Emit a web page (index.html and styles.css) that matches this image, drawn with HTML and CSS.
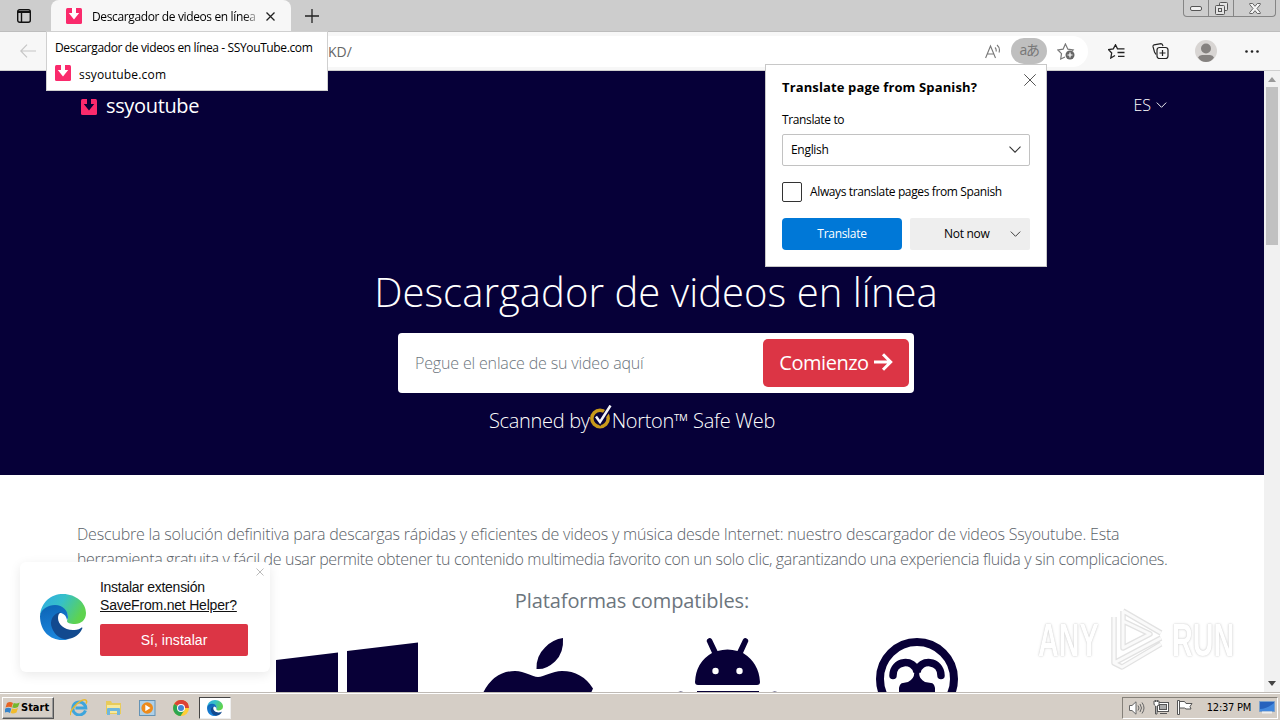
FILE: index.html
```html
<!DOCTYPE html>
<html lang="es">
<head>
<meta charset="utf-8">
<title>Descargador de videos en línea - SSYouTube.com</title>
<link rel="stylesheet" href="styles.css">
</head>
<body>
<svg width="0" height="0" class="defs">
  <defs>
    <linearGradient id="edgeGreen" x1="0" y1="0" x2="1" y2="0.4"><stop offset="0" stop-color="#2fa9e6"/><stop offset=".5" stop-color="#36c0c8"/><stop offset="1" stop-color="#5ed34f"/></linearGradient>
    <linearGradient id="edgeBlue" x1="0" y1="0" x2="0.2" y2="1"><stop offset="0" stop-color="#0c62b4"/><stop offset="1" stop-color="#1b86dc"/></linearGradient>
    <symbol id="edge" viewBox="0 0 46 46">
      <path d="M0 22C1 8 11 0 23 0c13 0 23 9 23 19 0 7-5 11-11 11-5 0-8-1-8-3 0-1 1-2 1-4 0-5-5-10-13-10C8 13 2 17 0 22z" fill="url(#edgeGreen)"/>
      <path d="M0 22c1-7 8-11 15-11 8 0 13 6 13 12 0 2-1 3-1 3-1-5-4-7-7-7-4 2-6 6-5 10 2 8 8 15 14 16-3 1-5 1-7 1C10 46 0 37 0 22z" fill="url(#edgeBlue)"/>
      <path d="M21 18c-8 1-12 9-9 16 3 8 10 12 16 11 7-1 12-5 14-10 1-1 0-2-1-1-3 2-6 2-8 2-9 0-15-6-15-12 0-3 1-5 3-6z" fill="#124a8f"/>
    </symbol>
    <symbol id="download" viewBox="0 0 16 16">
      <rect width="16" height="16" rx="1.500" fill="#fa2a6c"/>
      <path d="M6 0h4v5h3.200L8 11.500 2.800 5H6z" fill="currentColor"/>
    </symbol>
    <symbol id="chevron" viewBox="0 0 12 7"><path d="M.5.7 6 6.200 11.500.7" fill="none" stroke="currentColor" stroke-width="1.100"/></symbol>
  </defs>
</svg>

<div class="screen">
  <div class="tabstrip">
    <svg class="tab-actions" width="14" height="14" viewBox="0 0 14 14" fill="none" stroke="#111" stroke-width="1.400"><rect x=".7" y=".7" width="12.600" height="12.600" rx="2"/><path d="M1 3h12" stroke-width="2"/><path d="M4.500 4v9"/></svg>
    <div class="tab">
      <svg class="favicon" width="16" height="16"><use href="#download"/></svg>
      <span class="tab-title t-tab">Descargador de videos en línea</span>
      <svg width="9" height="9" viewBox="0 0 9 9" stroke="#222" stroke-width="1.300"><path d="M.5.5l8 8m0-8l-8 8"/></svg>
    </div>
    <svg class="new-tab" width="14" height="14" viewBox="0 0 14 14" stroke="#222" stroke-width="1.300"><path d="M7 0v14M0 7h14"/></svg>
    <div class="window-buttons">
      <span class="wb"><svg width="12" height="5" viewBox="0 0 12 5"><rect x=".5" y=".5" width="11" height="4" rx="1.500" fill="#f1f1f1" stroke="#555"/></svg></span>
      <span class="wb"><svg width="13" height="13" viewBox="0 0 13 13" fill="#e3e3e3" stroke="#555"><rect x="4.500" y=".5" width="8" height="8" rx="1"/><rect x=".5" y="3.500" width="9" height="9" rx="1"/><rect x="3.500" y="6.500" width="3" height="3"/></svg></span>
      <span class="wb wb-close"><svg width="12" height="11" viewBox="0 0 12 11" fill="#f5f5f5" stroke="#666"><path d="M.7.5h3L6 3.300 8.300.5h3v1L8 5.500l3.300 4v1h-3L6 7.700l-2.300 2.800h-3v-1L4 5.500.7 1.500z"/></svg></span>
    </div>
  </div>

  <div class="toolbar">
    <svg class="back" width="16" height="14" viewBox="0 0 16 14" fill="none" stroke="#c6c6c6" stroke-width="1.200"><path d="M16 7H1M7 .7.800 7 7 13.300"/></svg>
    <div class="address">
      <span class="url">KD/</span>
      <svg class="read" width="16" height="15" viewBox="0 0 16 15" fill="none" stroke="#777" stroke-width="1.100"><path d="M.6 14 5.500 2l5 12M2.300 10h6.500M10 3.500q1.700 1.600 1 4M12 1q3.500 3 2 7.500"/></svg>
      <span class="translate-pill">aあ</span>
      <svg class="star-plus" width="18" height="17" viewBox="0 0 18 17" fill="none" stroke="#777" stroke-width="1.200"><path d="M8 14 3.700 16l.8-5.300L.9 7l5.200-.8L8.400 1l2.500 5.200 5.200.8-1 1"/><circle cx="13" cy="12" r="4.500" fill="#666" stroke="none"/><path d="M13 9.500v5M10.500 12h5" stroke="#fff"/></svg>
    </div>
    <svg width="17" height="15" viewBox="0 0 17 15" fill="none" stroke="#222" stroke-width="1.300"><path d="M7 11.500 2.800 14l.9-5L.6 5.600l4.700-.7L7.500.8l2 4.100H16.500M9.500 8.500h7M10 12.300h6.500"/></svg>
    <svg class="collections" width="17" height="17" viewBox="0 0 17 17" fill="none" stroke="#222" stroke-width="1.200"><path d="M4 11.500 2.500 9 1 3.700Q.8 2.200 2 1.800L9 .7q1.500 0 2 2.500"/><rect x="5" y="4.500" width="11" height="11" rx="2.500"/><path d="M10.500 7v6M7.500 10h6"/></svg>
    <svg class="avatar" width="22" height="22" viewBox="0 0 22 22"><circle cx="11" cy="11" r="11" fill="#d8d5d3"/><circle cx="11" cy="8.500" r="5" fill="#858280"/><path d="M3 17.500q1-2.500 4-2.500h8q3 0 4 2.500Q16 22 11 22t-8-4.500z" fill="#858280"/></svg>
    <svg class="dots" width="14" height="3" viewBox="0 0 14 3" fill="#222"><circle cx="1.500" cy="1.500" r="1.300"/><circle cx="7" cy="1.500" r="1.300"/><circle cx="12.500" cy="1.500" r="1.300"/></svg>
  </div>

  <div class="viewport">
    <main class="page">
      <section class="hero">
        <header class="site-header">
          <a class="brand"><svg width="16" height="16"><use href="#download"/></svg><span class="t-brand">ssyoutube</span></a>
          <span class="lang"><span class="t-lang">ES</span><svg width="11" height="6"><use href="#chevron"/></svg></span>
        </header>
        <h1><span class="t-title">Descargador de videos en línea</span></h1>
        <div class="search">
          <span class="placeholder t-ph">Pegue el enlace de su video aquí</span>
          <button class="go"><span class="t-go">Comienzo</span><svg width="19" height="18" viewBox="0 0 19 18" fill="none" stroke="#fff" stroke-width="3"><path d="M0 9h16M9 1.200 16.700 9 9 16.800"/></svg></button>
        </div>
        <p class="norton"><span class="t-scan">Scanned by</span><svg width="22" height="24" viewBox="0 0 22 24" fill="none"><circle cx="10" cy="13.500" r="8.200" stroke="#c8991b" stroke-width="3.500"/><path d="M6 12l4 5L20 2" stroke="#05003a" stroke-width="5"/><path d="M6 11.500l4 5.500L20.500.5" stroke="#f4f4fa" stroke-width="2.500"/></svg><span class="t-norton">Norton™ Safe Web</span></p>
      </section>
      <section class="intro">
        <p><span class="t-l1">Descubre la solución definitiva para descargas rápidas y eficientes de videos y música desde Internet: nuestro descargador de videos Ssyoutube. Esta</span><br><span class="t-l2">herramienta gratuita y fácil de usar permite obtener tu contenido multimedia favorito con un solo clic, garantizando una experiencia fluida y sin complicaciones.</span></p>
        <h2><span class="t-plat">Plataformas compatibles:</span></h2>
        <div class="platforms">
          <svg width="142" height="55" viewBox="0 0 142 55"><path d="M0 22 62 14.500V55H0zM71 13 142 4.500V55H71z"/></svg>
          <svg class="apple" width="112" height="55" viewBox="0 0 112 55"><path d="M80 0q1 15-8 23.500Q63 32 53.500 31 53 18 62 9.500 70 1 80 0z"/><path d="M0 55Q11 33 32 33c10 0 17 6 23 6s14-6 24-6q20 0 31 17.500L108 55z"/></svg>
          <svg class="android" width="104" height="55" viewBox="0 0 104 55"><path d="M19 47V44Q20 24 36 15l-5-11a2.800 2.800 0 0 1 5-2.500l5.500 11.500q10-3 20 0L67 1.500A2.800 2.800 0 0 1 72 4l-5 11Q83 25 84 44q0 3-3 3H22q-3 0-3-3z"/><circle cx="39.500" cy="33" r="3.200" fill="#fff"/><circle cx="63.500" cy="33" r="3.200" fill="#fff"/><path d="M21 53h62v2H21zM0 55q5-3 9 0zM94 55q5-3 9 0z"/></svg>
          <svg class="linux" width="82" height="55" viewBox="0 0 82 55"><circle cx="41" cy="41" r="37" fill="none" stroke="#080037" stroke-width="8"/><path d="M17 37.500C17 22 38 20 41 34 44 20 65 22 65 37.500" fill="none" stroke="#080037" stroke-width="7.500" stroke-linecap="round"/><path d="M37 30h8q-5 9 4 14l6 1q3 0 4 5v5H23v-5q1-5 4-5l5-1q9-5 5-14z"/></svg>
        </div>
      </section>
    </main>
    <div class="scrollbar"><i class="arrow up"></i><i class="thumb"></i><i class="arrow down"></i></div>
  </div>

  <footer class="taskbar">
    <button class="start"><svg width="15" height="15" viewBox="0 0 15 15"><path d="M2 3q3-2 6 0L6.500 7.500Q4 6 .5 7.500z" fill="#e76524"/><path d="M8.700 3q3 1 6-.5L13 7Q10 8.500 7.200 7.500z" fill="#74b72d"/><path d="M.3 8.500Q3 7 6.300 8.500L5 13Q2 11-1 13z" fill="#3784ca"/><path d="M7 8.500q3 1 6-.5L11.500 12.500Q8 14 5.700 13z" fill="#f1bb2c"/></svg><b class="t-start">Start</b></button>
    <div class="quick">
      <svg width="18" height="17" viewBox="0 0 18 17"><path d="M15.500 11.500A6.500 6.500 0 1 1 15.800 9H5.500" fill="none" stroke="#3ea5dc" stroke-width="3"/><path d="M1 15.500C-3 15 10-1 15.500 1q2 1 .5 3.500" fill="none" stroke="#e9b92f" stroke-width="1.500"/></svg>
      <svg width="17" height="16" viewBox="0 0 17 16"><path d="M1 1h5l1 2h9v11H1z" fill="#e8cb5b"/><path d="M2 5h13v8H2z" fill="#f7e99b"/><path d="M2 15V9q0-1 1-1h11q1 0 1 1v6h-3v-4H5v4z" fill="#70b7dd"/></svg>
      <svg width="17" height="16" viewBox="0 0 17 16"><rect x=".5" y=".5" width="15.500" height="15" fill="#aed0e8" stroke="#6593b5"/><circle cx="8.200" cy="8" r="5.800" fill="#ed8b1c"/><path d="M6.300 4.700 11.500 8l-5.200 3.300z" fill="#fff"/></svg>
      <svg width="16" height="16" viewBox="0 0 16 16"><circle cx="8" cy="8" r="8" fill="#ffce35"/><path d="M8 8H16A8 8 0 0 0 1.200 3.900z" fill="#dc4136"/><path d="M8 8 1.200 3.900A8 8 0 0 0 7.500 16l4-6z" fill="#2ca650"/><path d="M8 4.500h7.200A8 8 0 0 0 8 0z" fill="#dc4136"/><circle cx="8" cy="8" r="4" fill="#fff"/><circle cx="8" cy="8" r="3" fill="#4285d4"/></svg>
    </div>
    <span class="active-app"><svg width="16" height="16"><use href="#edge"/></svg></span>
    <div class="tray">
      <svg width="16" height="14" viewBox="0 0 16 14" fill="#fff" stroke="#666"><path d="M.5 4.500H3L7 .8v12.400L3 9.500H.5z"/><path d="M9 4.500q2 2.500 0 5M11 3q3 4 0 8M13 1.500q4 5.500 0 11" fill="none"/></svg>
      <svg width="16" height="15" viewBox="0 0 16 15" fill="#fff" stroke="#555"><rect x="4.500" y="2.500" width="11" height="9"/><rect x="6.500" y="4.500" width="7" height="5" fill="#aaa"/><path d="M7 13.500h7" /><path d="M1 1h5v4q-1 1-2 1v8H2.500V6Q1 5 1 4zM2.500 0v2M4.500 0v2"/></svg>
      <svg width="16" height="15" viewBox="0 0 16 15" fill="#fff" stroke="#555"><path d="M.5.5h2v14h-2zM2.500 1.500h5l1.500 2h6l-2 3 1 2.500H9L7.500 8h-5z"/></svg>
      <span class="clock t-clock">12:37 PM</span>
      <svg width="16" height="13" viewBox="0 0 16 13"><path d="M.5.5h15v10H.5z" fill="#2762bd" stroke="#7aa0cb"/><path d="M1 8Q8 8 15 2v8H1z" fill="#4388dd"/><path d="M3 11.500h10" stroke="#eee" stroke-width="2"/></svg>
    </div>
  </footer>

  <aside class="tab-card">
    <span class="t-card">Descargador de videos en línea - SSYouTube.com</span>
    <div class="card-site"><svg class="favicon" width="16" height="16"><use href="#download"/></svg><span class="t-site">ssyoutube.com</span></div>
  </aside>

  <aside class="translate">
    <div class="tr-head"><b class="t-trh">Translate page from Spanish?</b><svg width="12" height="12" viewBox="0 0 12 12" stroke="#555"><path d="M.3.3l11.400 11.400m0-11.400L.3 11.700"/></svg></div>
    <span class="tr-label t-to">Translate to</span>
    <div class="select"><span class="t-eng">English</span><svg width="12" height="7"><use href="#chevron"/></svg></div>
    <label class="check"><i></i><span class="t-always">Always translate pages from Spanish</span></label>
    <div class="tr-buttons"><button class="primary"><span class="t-tr">Translate</span></button><button class="secondary"><span class="t-not">Not now</span><svg width="11" height="6"><use href="#chevron"/></svg></button></div>
  </aside>

  <aside class="install">
    <svg width="46" height="46"><use href="#edge"/></svg>
    <div class="install-body">
      <span class="t-in1">Instalar extensión</span>
      <u class="t-in2">SaveFrom.net Helper?</u>
      <button><span class="t-yes">Sí, instalar</span></button>
    </div>
    <svg class="install-x" width="8" height="8" viewBox="0 0 8 8" stroke="#bbb"><path d="M.5.5l7 7m0-7l-7 7"/></svg>
  </aside>

  <div class="watermark">
    <span class="wm wm-any">ANY</span>
    <svg width="58" height="66" viewBox="0 0 58 66" fill="none" stroke-linejoin="round"><g stroke="#e2e2e2" stroke-width="5.500"><path d="M15 4 53 26M15 4v37l27-14L15 14M6 10v46l8 4 39-23M6 56l47-25"/></g><g stroke="#fafafa" stroke-width="3"><path d="M15 4 53 26M15 4v37l27-14L15 14M6 10v46l8 4 39-23M6 56l47-25"/></g></svg>
    <span class="wm wm-run">RUN</span>
  </div>
</div>
</body>
</html>
```
FILE: styles.css
```css
* { box-sizing: border-box; }
body { margin: 0; font-family: "Open Sans", "Noto Sans", sans-serif; }
button { border: 0; padding: 0; font: inherit; }
svg { display: block; flex: none; }
span, b, u { white-space: nowrap; }
.defs { position: absolute; }
.screen { position: relative; width: 1280px; height: 720px; overflow: hidden; display: flex; flex-direction: column; background: #fff; }

/* text tracking */
.t-tab, .t-card { letter-spacing: -.37px; }
.t-brand { letter-spacing: -.35px; }
.t-title { letter-spacing: .04px; }
.t-ph { letter-spacing: -.16px; }
.t-go { letter-spacing: -.48px; }
.t-scan, .t-norton { letter-spacing: -.3px; }
.t-l1 { letter-spacing: -.19px; }
.t-l2 { letter-spacing: -.335px; }
.t-plat { letter-spacing: -.1px; }
.t-site { letter-spacing: .17px; }
.t-trh { letter-spacing: .13px; }
.t-to, .t-always { letter-spacing: -.37px; }
.t-eng, .t-tr, .t-not { letter-spacing: -.3px; }
.t-in1 { letter-spacing: -.28px; }
.t-in2 { letter-spacing: -.2px; }
.t-yes { letter-spacing: .05px; }
.t-clock { letter-spacing: -.25px; }

/* browser chrome */
.tabstrip { height: 32px; flex: none; display: flex; background: #cdcdcd; border-bottom: 1px solid #bdbdbd; }
.tab-actions { margin: 9px 0 0 17px; }
.tab { width: 240px; height: 32px; margin-left: 20px; padding: 0 15px; display: flex; align-items: center; background: #f7f7f7; border-radius: 8px 8px 0 0; }
.favicon { color: #fff; }
.tab-title { width: 164px; margin: 0 10px; overflow: hidden; font-size: 12px; -webkit-mask-image: linear-gradient(90deg, #000 152px, rgba(0, 0, 0, .3)); }
.new-tab { margin: 9px 0 0 14px; }
.window-buttons { margin-left: auto; margin-right: 4px; height: 17px; display: flex; border: 1px solid #858585; border-top: 0; border-radius: 0 0 4px 4px; }
.wb { width: 25px; display: flex; align-items: center; justify-content: center; border-right: 1px solid #858585; }
.wb-close { width: 41px; border: 0; }
.toolbar { height: 39px; flex: none; display: flex; align-items: center; padding: 0 21px 0 20px; background: #f7f7f7; border-bottom: 1px solid #cfcfcf; }
.address { width: 1028px; height: 31px; margin: 0 20px 0 24px; padding-right: 13px; display: flex; align-items: center; background: #fff; border-radius: 16px; }
.url { margin-left: 268px; color: #666; font-size: 14px; }
.read { margin-left: auto; }
.translate-pill { width: 36px; height: 26px; margin: 0 10px; border-radius: 13px; background: #bfbfbf; color: #777; font: 14px/24px "Open Sans", "Noto Sans CJK JP", sans-serif; letter-spacing: -1.5px; text-align: center; }
.collections { margin-left: 27px; }
.avatar { margin-left: 26px; }
.dots { margin-left: auto; }

/* web page */
.viewport { height: 621px; flex: none; display: flex; }
.page { width: 1264px; overflow: hidden; }
.hero { height: 404px; background: #060038; color: #fff; }
.site-header { height: 68px; padding: 0 97px 0 81px; display: flex; align-items: center; justify-content: space-between; }
.brand, .lang { display: flex; align-items: center; }
.brand { gap: 9px; color: #060038; font-size: 20px; line-height: 27px; padding-top: 3px; }
.brand span { color: #fff; margin-top: -3px; }
.lang { gap: 5px; font-size: 16px; font-weight: 350; }
h1 { margin: 125px 0 0 48px; text-align: center; font-size: 40px; line-height: 56px; font-weight: 320; }
.search { width: 516px; height: 60px; margin: 13px 0 0 398px; padding: 6px 5px 6px 17px; display: flex; align-items: center; justify-content: space-between; background: #fff; border-radius: 4px; }
.placeholder { color: #6c757d; font-size: 16px; font-weight: 300; }
.go { width: 146px; height: 48px; display: flex; align-items: center; justify-content: center; gap: 5px; padding-bottom: 2px; background: #dc3545; border-radius: 5px; color: #fff; font-size: 20px; }
.norton { margin: 12px 0 0; display: flex; justify-content: center; font-size: 20px; line-height: 32px; font-weight: 300; }
.intro { color: #5b6269; font-weight: 300; }
.intro p { margin: 47px 0 0 77px; font-size: 16px; line-height: 25px; }
h2 { margin: 13px 0 0; font-size: 20px; line-height: 32px; font-weight: 400; text-align: center; color: #6c757d; }
.platforms { padding-top: 21px; padding-left: 276px; display: flex; fill: #080037; }
.apple { margin-left: 65px; }
.android { margin-left: 81px; }
.linux { margin-left: 96px; }
.scrollbar { width: 16px; display: flex; flex-direction: column; align-items: center; background: #f1f1f1; }
.arrow { border: 4px solid transparent; }
.up { margin-top: 6px; border-bottom: 5px solid #999; border-top: 0; height: 5px; }
.thumb { width: 12px; height: 158px; margin-top: 5px; background: #c1c1c1; }
.down { margin-top: auto; margin-bottom: 6px; border-top: 5px solid #444; border-bottom: 0; height: 5px; }

/* taskbar */
.taskbar { height: 28px; flex: none; display: flex; align-items: center; padding: 2px 2px 0; background: #d5cec6; border-top: 1px solid #bfbab5; box-shadow: inset 0 1px #fff; }
.start { width: 52px; height: 22px; padding-left: 2px; display: flex; align-items: center; gap: 1px; color: #000; background: #d5cec6; border: 1px solid; border-color: #fff #555 #555 #fff; box-shadow: inset -1px -1px #999; font-family: "DejaVu Sans Condensed", "DejaVu Sans", sans-serif; font-size: 11px; }
.quick { display: flex; align-items: center; gap: 17px; margin-left: 16px; }
.active-app { width: 32px; height: 22px; margin-left: 10px; display: flex; align-items: center; justify-content: center; background: #fff; border: 1px solid; border-color: #444 #eee #eee #444; }
.tray { width: 156px; height: 22px; margin-left: auto; padding: 0 2px 0 6px; display: flex; align-items: center; gap: 8px; border: 1px solid; border-color: #858079 #fff #fff #858079; }
.clock { margin-left: auto; font: 11px "DejaVu Sans Condensed", "DejaVu Sans", sans-serif; }

/* tab hover card */
.tab-card { position: absolute; left: 46px; top: 31px; width: 282px; height: 60px; padding: 7px 8px; background: #fff; border: 1px solid #d0d0d0; font-size: 12px; line-height: 18px; }
.card-site { display: flex; align-items: center; gap: 8px; margin-top: 9px; }
.card-site svg { margin-top: -4px; }

/* translate prompt */
.translate { position: absolute; left: 765px; top: 64px; width: 282px; height: 203px; padding: 8px 16px; display: flex; flex-direction: column; background: #fff; border: 1px solid #c8c8c8; font-size: 12px; }
.tr-head { height: 28px; display: flex; justify-content: space-between; line-height: 28px; margin-right: -6px; }
.tr-head b { font-size: 13px; }
.tr-head svg { margin-top: 1px; }
.tr-label { line-height: 18px; margin-top: 10px; }
.select { height: 32px; margin-top: 5px; padding: 0 8px 1px; display: flex; align-items: center; justify-content: space-between; border: 1px solid #c2c2c2; border-radius: 2px; color: #000; }
.select svg, .secondary svg { color: #333; }
.check { display: flex; align-items: center; gap: 8px; margin-top: 16px; height: 20px; }
.check span { margin-top: -1px; }
.check i { width: 20px; height: 20px; border: 1px solid #333; border-radius: 2px; }
.tr-buttons { display: flex; gap: 8px; margin-top: 16px; }
.tr-buttons button { width: 120px; height: 32px; padding-bottom: 1px; border-radius: 2px; }
.tr-buttons .primary { background: #0078d7; color: #fff; border-radius: 4px; }
.tr-buttons .secondary { display: flex; align-items: center; justify-content: space-between; padding: 0 9px 1px 34px; background: #eee; }

/* extension prompt */
.install { position: absolute; left: 20px; top: 562px; width: 250px; height: 110px; padding: 16px 22px 16px 20px; display: flex; align-items: center; gap: 14px; background: #fff; border-radius: 6px; box-shadow: 0 3px 12px rgba(0, 0, 0, .09); font: 14px/18px "Liberation Sans", sans-serif; color: #111; }
.install-body { display: flex; flex-direction: column; }
.install-body button { width: 148px; height: 32px; margin-top: 10px; background: #dc3545; border-radius: 2px; color: #fff; }
.install-x { position: absolute; right: 6px; top: 6px; }

/* watermark over the page */
.watermark { position: absolute; left: 1038px; top: 607px; display: flex; align-items: center; gap: 6px; }
.wm { width: 64px; font: bold 47px/66px "Liberation Sans", sans-serif; color: #fff; text-shadow: 0 0 3px #ccc, 0 0 1px #ccc; transform: scaleX(.61); transform-origin: left; }
.wm-run { width: 62px; }
```
